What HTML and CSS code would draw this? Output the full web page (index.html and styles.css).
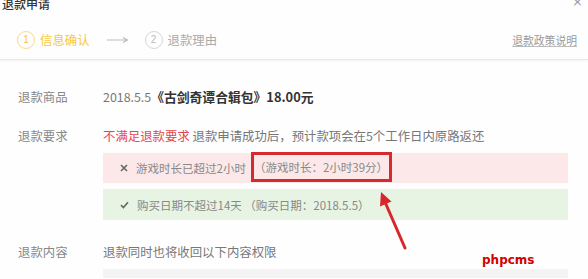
FILE: index.html
```html
<!DOCTYPE html>
<html lang="zh-CN">
<head>
<meta charset="utf-8">
<title>退款申请</title>
<link rel="stylesheet" href="styles.css">
</head>
<body>
<div class="dialog">
  <div class="top">
    <div class="header">
      <span class="title">退款申请</span>
      <span class="close">×</span>
    </div>
    <div class="steps">
      <span class="circle active">1</span>
      <span class="step-text active">信息确认</span>
      <svg class="step-arrow" width="22" height="8" viewBox="0 0 22 8"><path d="M0 4H20M16 1.5L20.5 4L16 6.5" fill="none" stroke="#bbb" stroke-width="1.2"/></svg>
      <span class="circle">2</span>
      <span class="step-text">退款理由</span>
      <a class="policy">退款政策说明</a>
    </div>
  </div>

  <div class="row row-goods">
    <span class="label">退款商品</span>
    <span class="value">2018.5.5<b class="strong">《古剑奇谭合辑包》18.00元</b></span>
  </div>

  <div class="row row-req">
    <span class="label">退款要求</span>
    <div class="value">
      <div><span class="warn">不满足退款要求</span> 退款申请成功后，预计款项会在5个工作日内原路返还</div>
      <div class="check fail">
        <svg class="ico" width="8" height="8" viewBox="0 0 8 8"><path d="M1 1L7 7M7 1L1 7" stroke="#666" stroke-width="1.6"/></svg>
        <span class="ctext">游戏时长已超过2小时</span>
        <span class="hl">（游戏时长：2小时39分）</span>
      </div>
      <div class="check ok">
        <svg class="ico" width="9" height="8" viewBox="0 0 9 8"><path d="M1 4.2L3.4 6.5L8 1.2" fill="none" stroke="#666" stroke-width="1.6"/></svg>
        <span class="ctext">购买日期不超过14天 （购买日期：2018.5.5）</span>
      </div>
    </div>
  </div>

  <div class="row row-content">
    <span class="label">退款内容</span>
    <div class="value">
      <div>退款同时也将收回以下内容权限</div>
      <div class="perm"></div>
    </div>
  </div>

  <svg class="pointer" width="45" height="66" viewBox="0 0 45 66"><path d="M35 62L15 16" stroke="#d8262c" stroke-width="3" stroke-linecap="round"/><path d="M11 6L21.5 15.5L10 20.5Z" fill="#d8262c"/></svg>
  <span class="mark">phpcms</span>
</div>
</body>
</html>
```

FILE: styles.css
```css
html, body {
  margin: 0;
  padding: 0;
  background: #fefefe;
  overflow: hidden;
}
body {
  font-family: "Noto Sans CJK SC", "Noto Sans", sans-serif;
  color: #777;
  font-size: 12.4px;
}
.dialog {
  position: relative;
  width: 588px;
  height: 279px;
  overflow: hidden;
}
.top {
  border-bottom: 1px solid #e8e8e8;
  box-shadow: 0 1px 2px rgba(0, 0, 0, 0.05);
  padding-bottom: 10px;
}
.header {
  display: flex;
  justify-content: space-between;
  align-items: flex-start;
  height: 12px;
}
.title {
  font-size: 12px;
  line-height: 16px;
  margin-top: -4px;
  padding-left: 2px;
  color: #333;
  font-weight: 500;
}
.close {
  font-size: 13px;
  line-height: 10px;
  margin-top: -3px;
  margin-right: 5px;
  color: #999;
  font-family: "DejaVu Sans", sans-serif;
}
.steps {
  display: flex;
  align-items: center;
  height: 18px;
  margin-top: 19px;
  padding: 0 11px 0 17px;
}
.circle {
  box-sizing: border-box;
  width: 18px;
  height: 18px;
  border-radius: 50%;
  border: 1px solid #d6d6d6;
  color: #bbb;
  font-size: 10px;
  display: flex;
  align-items: center;
  justify-content: center;
  line-height: 1;
  font-family: "Liberation Sans", sans-serif;
}
.circle.active {
  border-color: #f8dc8a;
  color: #f5c445;
}
.step-text {
  font-size: 12.4px;
  margin-left: 5px;
  color: #aaa;
}
.step-text.active {
  color: #f6c843;
}
.step-arrow {
  margin: 0 16px 0 17px;
}
.policy {
  margin-left: auto;
  font-size: 10.8px;
  color: #999;
  text-decoration: underline;
  text-decoration-color: #bbb;
}
.row {
  display: grid;
  grid-template-columns: 85px 1fr;
  padding: 0 20px 0 18px;
  line-height: 20px;
}
.label {
  color: #888;
}
.row-goods {
  margin-top: 27px;
}
.strong {
  color: #333;
  font-weight: 700;
  font-size: 12.8px;
}
.row-req {
  margin-top: 19px;
}
.warn {
  color: #e5474f;
}
.check {
  display: flex;
  align-items: stretch;
  font-size: 11.5px;
  color: #888;
  padding-left: 17px;
}
.check.fail {
  margin-top: 7px;
  height: 30px;
  background: #fce8e8;
}
.check.ok {
  margin-top: 6px;
  height: 31px;
  background: #e7f4e3;
}
.ico {
  align-self: center;
  margin-right: 8px;
}
.ctext {
  align-self: center;
}
.hl {
  box-sizing: border-box;
  margin-left: 5px;
  margin-top: -1px;
  height: 30px;
  width: 141px;
  border: 3px solid #d42a30;
  display: flex;
  align-items: center;
  padding-left: 0;
  color: #888;
}
.row-content {
  margin-top: 22px;
}
.perm {
  margin-top: 7px;
  height: 9px;
  background: #f4f4f4;
}
.pointer {
  position: absolute;
  left: 370px;
  top: 186px;
}
.mark {
  position: absolute;
  left: 482px;
  top: 253px;
  font-family: "DejaVu Sans", sans-serif;
  font-weight: 700;
  font-size: 12px;
  color: #d40000;
  line-height: 14px;
}
```
